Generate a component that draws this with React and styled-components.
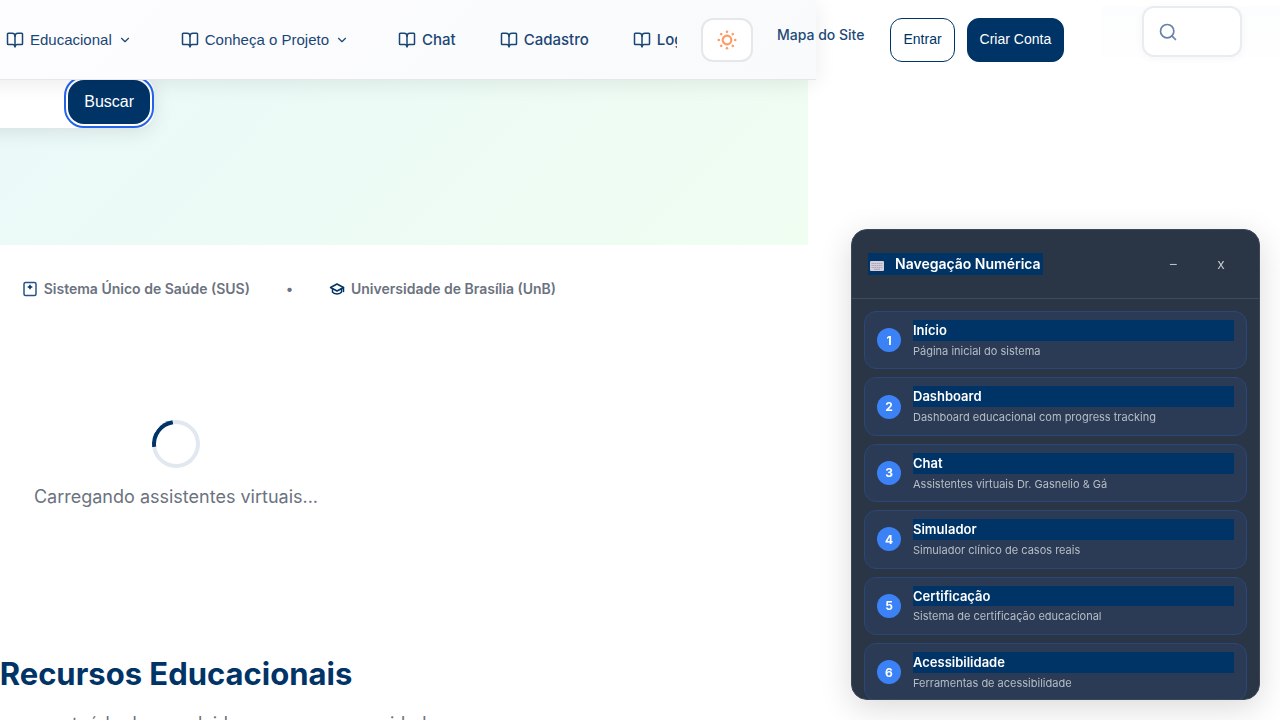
import React from "react";
import styled, { createGlobalStyle } from "styled-components";
import { BookOpen, ChevronDown, Search } from "lucide-react";

const navy = "#003366";
const arial = '"Liberation Sans", Arial, sans-serif';

const GlobalStyle = createGlobalStyle`
  *, *::before, *::after { box-sizing: border-box; }
  body {
    margin: 0;
    background: #fff;
    color: #6b7280;
    font-family: Inter, sans-serif;
    font-size: 16px;
    line-height: 1.6;
  }
  button, input { font: inherit; }
  a { color: inherit; text-decoration: none; }
  h1, h2, p, ul, ol { margin: 0; padding: 0; }
`;

/* The document is shown scrolled sideways by this amount. */
const scrollX = 456;

const Viewport = styled.div`
  height: 100vh;
  overflow: hidden;
`;

const Header = styled.header`
  position: relative;
  z-index: 2;
  display: flex;
  align-items: center;
  width: calc(100% - 8px);
  height: 80px;
  margin-left: -${scrollX}px;
  padding-left: 462px;
  background: linear-gradient(135deg, #ffffff 0%, #fcfcfe 50%, #f8fafc 100%);
  border-bottom: 1px solid #e5e7eb;
  box-shadow: 0 4px 20px rgba(0, 0, 0, 0.08);
`;

const Nav = styled.nav`
  display: flex;
  flex: 0 0 671px;
  gap: 44px;
  margin-right: 24px;
  overflow: hidden;
  color: #1a4675;
`;

const navItem = `
  display: flex;
  align-items: center;
  flex-shrink: 0;
  gap: 6px;
  height: 44px;
  padding: 0;
  border: 0;
  background: none;
  color: inherit;
  white-space: nowrap;
`;

const NavLink = styled.a`
  ${navItem}
  font-size: 15px;
  font-weight: 500;
`;

const NavMenu = styled.button`
  ${navItem}
  padding-right: 5px;
  font-family: ${arial};
  font-size: 15px;
`;

const ThemeButton = styled.button`
  display: grid;
  place-items: center;
  flex: 0 0 52px;
  height: 44px;
  margin-right: 24px;
  padding: 0;
  background: #fff;
  border: 2px solid #e5e7eb;
  border-radius: 12px;
`;

const SiteMap = styled.a`
  flex-shrink: 0;
  margin-right: 26px;
  padding-bottom: 8px;
  color: #1f4a78;
  font-size: 14px;
  font-weight: 500;
  white-space: nowrap;
`;

const AccountButton = styled.button`
  flex-shrink: 0;
  height: 44px;
  margin-right: 12px;
  padding: 0 12px;
  border: 1px solid ${navy};
  border-radius: 12px;
  background: ${(p) => (p.$filled ? navy : "#fff")};
  color: ${(p) => (p.$filled ? "#fff" : navy)};
  font-family: ${arial};
  font-size: 14px;
  white-space: nowrap;
`;

const SearchStrip = styled.div`
  flex: 0 0 178px;
  align-self: flex-start;
  display: flex;
  margin: 6px 0 0 26px;
  padding-left: 40px;
  background: linear-gradient(180deg, #fcfdfe 0%, #fefefe 100%);
`;

const SearchBox = styled.label`
  display: flex;
  align-items: center;
  width: 100px;
  height: 51px;
  padding: 0 14px;
  background: #fff;
  border: 2px solid #e8edf3;
  border-radius: 12px;
  box-shadow: 0 2px 8px rgba(0, 0, 0, 0.04);
  color: #6483a6;

  svg { flex-shrink: 0; }
  input {
    width: 100%;
    min-width: 0;
    border: 0;
    outline: 0;
    background: none;
  }
`;

const Main = styled.main`
  width: calc(100% - 16px);
  margin-left: -${scrollX}px;
`;

const Hero = styled.section`
  display: flow-root;
  height: 165px;
  background: linear-gradient(135deg, #e8f7fd 0%, #f0fdf1 100%);
`;

const HeroForm = styled.form`
  display: flex;
  width: 610px;
  margin-top: -4px;
  padding: 4px;
  background: #fff;
  border-radius: 16px;
  box-shadow: 0 4px 20px rgba(0, 0, 0, 0.1);

  input {
    flex: 1;
    min-width: 0;
    border: 0;
    background: none;
  }
`;

const HeroButton = styled.button`
  height: 44px;
  padding: 0 16px;
  background: ${navy};
  border: 0;
  border-radius: 16px;
  outline: 2px solid #2563eb;
  outline-offset: 2px;
  color: #fff;
  font-family: ${arial};
  font-size: 16px;
`;

const Partners = styled.ul`
  display: flex;
  justify-content: flex-end;
  align-items: center;
  gap: 36px;
  padding: 33px 252px 0 0;
  list-style: none;
  font-size: 14px;
  font-weight: 600;
  line-height: 22px;
`;

const Partner = styled.li`
  display: flex;
  align-items: center;
  gap: 6px;
  white-space: nowrap;
`;

const Loading = styled.section`
  display: flex;
  flex-direction: column;
  align-items: center;
  gap: 14px;
  margin-top: 120px;
  font-size: 18px;
  line-height: 30px;
`;

const Spinner = styled.div`
  width: 48px;
  height: 48px;
  border: 4px solid #e2e8f0;
  border-top-color: ${navy};
  border-radius: 50%;
  transform: rotate(-53deg);
`;

const Resources = styled.section`
  margin-top: 142px;
  text-align: center;

  h2 {
    color: ${navy};
    font-size: 31px;
    font-weight: 700;
    line-height: 40px;
  }
  p {
    margin-top: 16px;
    font-size: 18px;
    line-height: 28px;
  }
`;

const Panel = styled.aside`
  position: fixed;
  z-index: 5;
  right: 20px;
  bottom: 20px;
  width: 409px;
  height: 471px;
  overflow: hidden;
  background: #2a3545;
  border: 1px solid #3c4858;
  border-radius: 16px;
  box-shadow: 0 8px 32px rgba(0, 0, 0, 0.15);
`;

const PanelHeader = styled.div`
  display: flex;
  align-items: center;
  gap: 4px;
  padding: 12px 16px;
  border-bottom: 1px solid #3f4b5b;
`;

const PanelTitle = styled.h2`
  display: flex;
  align-items: center;
  gap: 11px;
  margin-right: auto;
  padding: 0 2px;
  background: ${navy};
  color: #fff;
  font-size: 14px;
  font-weight: 600;
  line-height: 22px;
`;

const PanelButton = styled.button`
  width: 44px;
  height: 44px;
  padding: 0;
  background: none;
  border: 0;
  color: #c3c8ce;
  font-family: ${arial};
  font-size: 14px;
`;

const Shortcuts = styled.ol`
  display: grid;
  gap: 8px;
  padding: 12px;
  list-style: none;
`;

const Shortcut = styled.a`
  display: flex;
  align-items: center;
  gap: 12px;
  padding: 8px 12px;
  background: #2c3b55;
  border: 1px solid #2b4778;
  border-radius: 12px;
`;

const Digit = styled.span`
  display: grid;
  place-items: center;
  flex: 0 0 24px;
  height: 24px;
  border-radius: 50%;
  background: #3b82f6;
  color: #fff;
  font-size: 12px;
  font-weight: 700;
`;

const ShortcutText = styled.span`
  display: grid;
  flex: 1;
  gap: 2px;
  color: #b6bdc6;
  font-size: 11px;

  strong {
    background: ${navy};
    color: #fff;
    font-size: 13px;
    font-weight: 600;
  }
`;

const SunIcon = () => (
  <svg width="20" height="20" viewBox="0 0 20 20" fill="none" aria-hidden="true">
    <circle cx="10" cy="10" r="4.3" stroke="#ff9b66" strokeWidth="2.2" />
    <g fill="#ff9b66">
      {[0, 45, 90, 135, 180, 225, 270, 315].map((a) => (
        <circle key={a} cx="10" cy="1.8" r="1.3" transform={`rotate(${a} 10 10)`} />
      ))}
    </g>
  </svg>
);

const HealthIcon = () => (
  <svg width="16" height="16" viewBox="0 0 16 16" fill="none" aria-hidden="true">
    <rect x="2" y="1.5" width="12" height="13" rx="1.5" stroke="#285483" strokeWidth="1.5" />
    <path d="M8 3.7v4.6M5.7 6h4.6" stroke={navy} strokeWidth="1.5" />
  </svg>
);

const CapIcon = () => (
  <svg width="16" height="16" viewBox="0 0 16 16" fill="none" stroke={navy} strokeWidth="1.5" strokeLinejoin="round" strokeLinecap="round" aria-hidden="true">
    <path d="M8 3 14.5 6.5 8 10 1.5 6.5Z" />
    <path d="M3.5 8v3.2C5 13.5 11 13.5 12.5 11.2V8M14.5 6.5v4" />
  </svg>
);

const KeyboardIcon = () => (
  <svg width="14" height="22" viewBox="0 0 14 22" aria-hidden="true">
    <rect x="0" y="8" width="14" height="10" rx="1" fill="#d5cfdb" />
    <path d="M1.5 10.5h11M1.5 12.5h11M1.5 14.5h11" stroke="#aba3b6" strokeWidth="1" strokeDasharray="1.3 .5" />
    <path d="M4 16.3h6" stroke="#aba3b6" strokeWidth="1" />
  </svg>
);

const shortcuts = [
  ["Início", "Página inicial do sistema"],
  ["Dashboard", "Dashboard educacional com progress tracking"],
  ["Chat", "Assistentes virtuais Dr. Gasnelio & Gá"],
  ["Simulador", "Simulador clínico de casos reais"],
  ["Certificação", "Sistema de certificação educacional"],
  ["Acessibilidade", "Ferramentas de acessibilidade"],
];

export default function App() {
  return (
    <Viewport>
      <GlobalStyle />
      <Header>
        <Nav aria-label="Principal">
          {["Educacional", "Conheça o Projeto"].map((t) => (
            <NavMenu key={t} type="button">
              <BookOpen size={18} />
              {t}
              <ChevronDown size={14} />
            </NavMenu>
          ))}
          {["Chat", "Cadastro", "Login"].map((t) => (
            <NavLink key={t} href="#">
              <BookOpen size={18} />
              {t}
            </NavLink>
          ))}
        </Nav>
        <ThemeButton type="button" aria-label="Alternar tema">
          <SunIcon />
        </ThemeButton>
        <SiteMap href="#">Mapa do Site</SiteMap>
        <AccountButton type="button">Entrar</AccountButton>
        <AccountButton type="button" $filled>Criar Conta</AccountButton>
        <SearchStrip>
          <SearchBox>
            <Search size={20} />
            <input type="search" aria-label="Pesquisar no site" />
          </SearchBox>
        </SearchStrip>
      </Header>

      <Main>
        <Hero>
          <HeroForm>
            <input type="text" aria-label="Buscar conteúdo" />
            <HeroButton type="button">Buscar</HeroButton>
          </HeroForm>
        </Hero>

        <Partners>
          <Partner><HealthIcon />Sistema Único de Saúde (SUS)</Partner>
          <Partner aria-hidden="true">•</Partner>
          <Partner><CapIcon />Universidade de Brasília (UnB)</Partner>
        </Partners>

        <Loading>
          <Spinner />
          <p>Carregando assistentes virtuais...</p>
        </Loading>

        <Resources>
          <h2>Recursos Educacionais</h2>
          <p>Explore nosso conteúdo desenvolvido para essa comunidade</p>
        </Resources>
      </Main>

      <Panel aria-label="Navegação Numérica">
        <PanelHeader>
          <PanelTitle><KeyboardIcon /> Navegação Numérica</PanelTitle>
          <PanelButton type="button" aria-label="Minimizar">−</PanelButton>
          <PanelButton type="button" aria-label="Fechar">x</PanelButton>
        </PanelHeader>
        <Shortcuts>
          {shortcuts.map(([title, text], i) => (
            <li key={title}>
              <Shortcut href="#">
                <Digit>{i + 1}</Digit>
                <ShortcutText>
                  <strong>{title}</strong>
                  {text}
                </ShortcutText>
              </Shortcut>
            </li>
          ))}
        </Shortcuts>
      </Panel>
    </Viewport>
  );
}
